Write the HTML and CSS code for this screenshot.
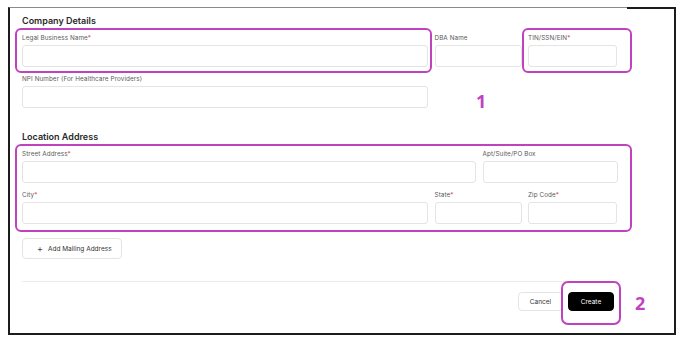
FILE: index.html
```html
<!DOCTYPE html>
<html>
<head>
<meta charset="utf-8">
<link rel="stylesheet" href="styles.css">
</head>
<body>
<div class="page">
  <div class="frame">
    <section class="section">
      <h2 class="heading">Company Details</h2>
      <div class="row row-a">
        <div class="field"><label>Legal Business Name<span class="req">*</span></label><div class="input"></div></div>
        <div class="field"><label>DBA Name</label><div class="input"></div></div>
        <div class="field"><label>TIN/SSN/EIN<span class="req">*</span></label><div class="input"></div></div>
      </div>
      <div class="row row-a">
        <div class="field"><label>NPI Number (For Healthcare Providers)</label><div class="input"></div></div>
      </div>
    </section>
    <section class="section loc">
      <h2 class="heading">Location Address</h2>
      <div class="row row-b">
        <div class="field"><label>Street Address<span class="req">*</span></label><div class="input"></div></div>
        <div class="field"><label>Apt/Suite/PO Box</label><div class="input"></div></div>
      </div>
      <div class="row row-a">
        <div class="field"><label>City<span class="req">*</span></label><div class="input"></div></div>
        <div class="field"><label>State<span class="req">*</span></label><div class="input"></div></div>
        <div class="field"><label>Zip Code<span class="req">*</span></label><div class="input"></div></div>
      </div>
    </section>
    <button class="btn add"><span class="plus">+</span>Add Mailing Address</button>
    <div class="divider"></div>
    <div class="footer">
      <button class="btn cancel">Cancel</button>
      <button class="btn create">Create</button>
    </div>
  </div>

  <div class="mark mark-legal"></div>
  <div class="mark mark-tin"></div>
  <div class="mark mark-loc"></div>
  <div class="mark mark-create"></div>
  <div class="num num-1">1</div>
  <div class="num num-2">2</div>
</div>
</body>
</html>
```

FILE: styles.css
```css
* { box-sizing: border-box; }
html, body { margin: 0; padding: 0; background: #fff; }
body { font-family: Inter, "Open Sans", "Liberation Sans", sans-serif; color: #222; }
.page { position: relative; width: 688px; height: 344px; padding: 7px 0 0 8px; }

.frame {
  position: relative;
  width: 668px;
  height: 328px;
  border-left: 2px solid #1c1c1c;
  border-right: 2px solid #1c1c1c;
  border-bottom: 2px solid #1c1c1c;
  border-top: 1px solid #8a8a8a;
  padding: 7px 56px 0 12px;
}
.frame::after {
  content: "";
  position: absolute;
  top: -1px;
  right: -2px;
  width: 49px;
  height: 2px;
  background: #1c1c1c;
}

.heading {
  margin: 0 0 7px 0;
  font-size: 9px;
  line-height: 12px;
  font-weight: 600;
  color: #2a2a2a;
}
.loc { margin-top: 23px; }

.row { display: grid; column-gap: 6.5px; margin-bottom: 8px; }
.row-a { grid-template-columns: 406px 87px 89px; }
.row-b { grid-template-columns: 454px 135px; }
.row:last-child { margin-bottom: 0; }

.field label {
  display: block;
  font-size: 6.3px;
  line-height: 8px;
  letter-spacing: 0.1px;
  color: #5a5a5a;
  margin-bottom: 3px;
  white-space: nowrap;
}
.req { color: #e0342f; }
.input {
  height: 22px;
  border: 1px solid #e4e4e4;
  border-radius: 3px;
  background: #fff;
}

.btn {
  font-family: inherit;
  background: #fff;
  border: 1px solid #e4e4e4;
  border-radius: 4px;
  color: #333;
  font-size: 6.5px;
  padding: 0;
  cursor: pointer;
}
.add {
  display: flex;
  align-items: center;
  margin-top: 14px;
  width: 100px;
  height: 21px;
  padding-left: 14px;
}
.plus { font-size: 9px; margin-right: 5px; color: #444; line-height: 1; }

.divider { height: 1px; background: #ececec; margin-top: 22px; }

.footer {
  display: flex;
  justify-content: flex-end;
  gap: 5px;
  margin-top: 10px;
  padding-right: 4px;
}
.cancel { width: 45px; height: 19px; }
.create {
  width: 46px; height: 19px;
  background: #000;
  border-color: #000;
  color: #fff;
  border-radius: 4px;
}

.mark {
  position: absolute;
  border: 2px solid #bf43bf;
  border-radius: 6px;
}
.mark-legal { left: 15px; top: 28px; width: 417px; height: 45px; }
.mark-tin { left: 522px; top: 28px; width: 110px; height: 45px; }
.mark-loc { left: 15px; top: 144px; width: 617px; height: 88px; }
.mark-create { left: 561px; top: 281px; width: 60px; height: 44px; border-radius: 7px; }

.num {
  position: absolute;
  font-family: "Open Sans", "Liberation Sans", sans-serif;
  font-weight: 700;
  font-size: 18px;
  line-height: 18px;
  color: #bf43bf;
}
.num-1 { left: 476px; top: 92px; }
.num-2 { left: 635px; top: 294px; }
```
